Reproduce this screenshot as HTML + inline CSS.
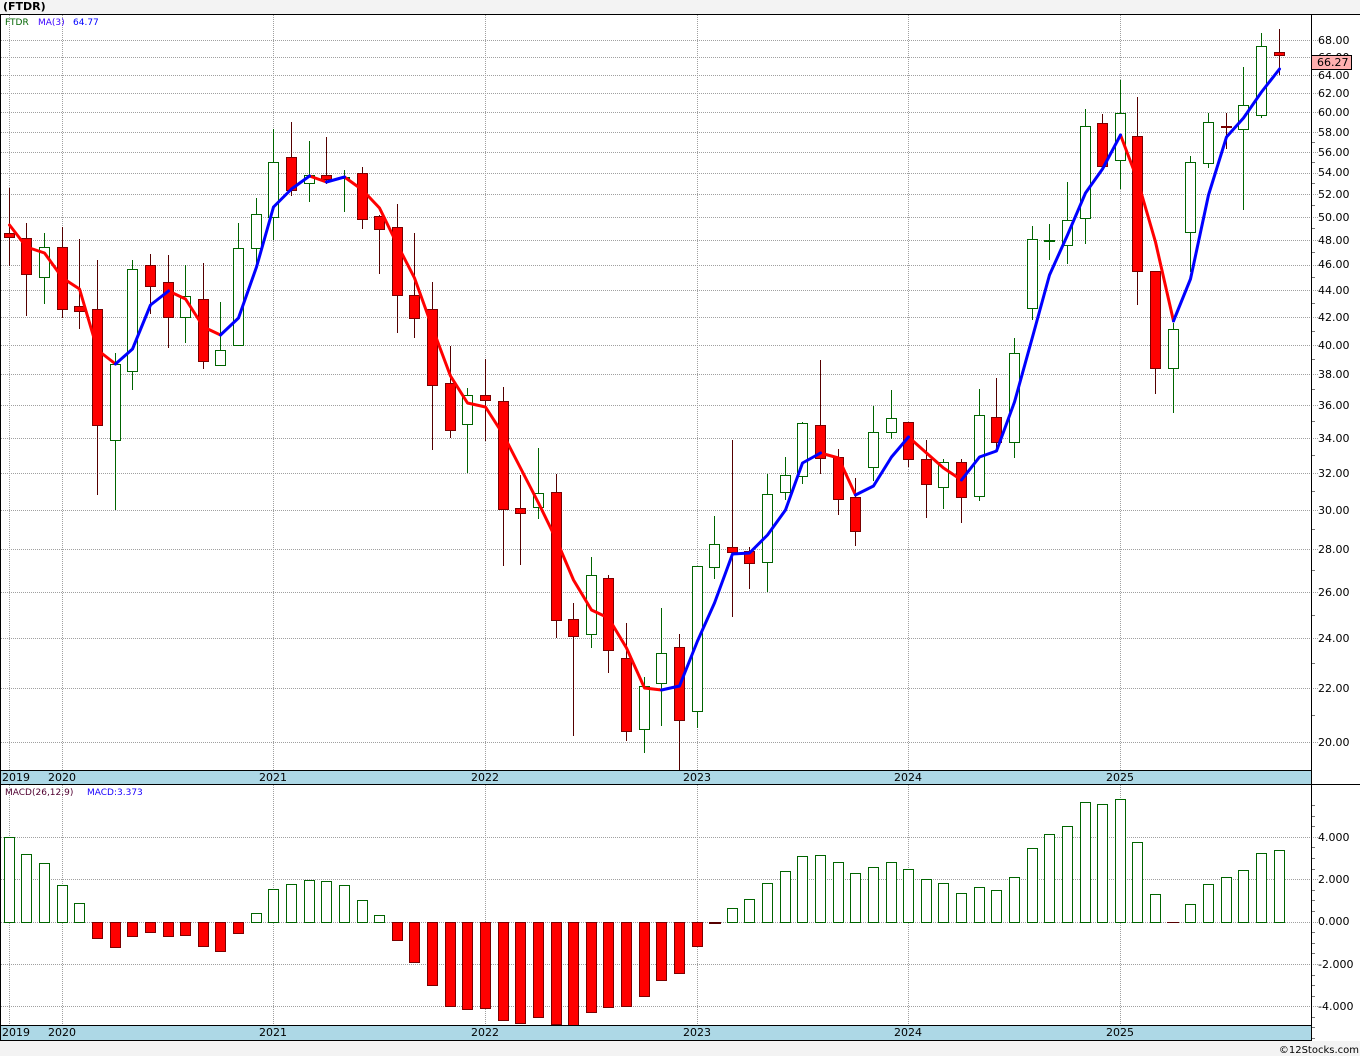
<!DOCTYPE html>
<html>
<head>
<meta charset="utf-8">
<title>(FTDR)</title>
<style>
html,body{margin:0;padding:0;background:#f3f3f3}
svg{display:block}
text{font-family:"DejaVu Sans","Liberation Sans",sans-serif;font-size:11px;fill:#000}
.s{font-size:9px}
</style>
</head>
<body>
<svg width="1360" height="1056" viewBox="0 0 1360 1056" xmlns="http://www.w3.org/2000/svg">
<rect width="1360" height="1056" fill="#f3f3f3"/>
<rect x="0" y="14" width="1360" height="1027" fill="#fff"/>
<text x="3" y="10" style="font-weight:bold">(FTDR)</text>

<g shape-rendering="crispEdges" fill="none">
<path stroke="#a0a0a0" stroke-dasharray="1 1" d="M1 40.5H1318M1 57.5H1318M1 75.5H1318M1 93.5H1318M1 112.5H1318M1 132.5H1318M1 152.5H1318M1 173.5H1318M1 194.5H1318M1 217.5H1318M1 240.5H1318M1 265.5H1318M1 290.5H1318M1 317.5H1318M1 345.5H1318M1 374.5H1318M1 405.5H1318M1 438.5H1318M1 473.5H1318M1 510.5H1318M1 549.5H1318M1 592.5H1318M1 638.5H1318M1 688.5H1318M1 742.5H1318M1 837.5H1318M1 879.5H1318M1 922.5H1318M1 964.5H1318M1 1006.5H1318"/>
<path stroke="#a0a0a0" stroke-dasharray="1 1" d="M9.5 15V770M62.5 15V770M273.5 15V770M485.5 15V770M697.5 15V770M908.5 15V770M1120.5 15V770M9.5 785V1025M62.5 785V1025M273.5 785V1025M485.5 785V1025M697.5 785V1025M908.5 785V1025M1120.5 785V1025"/>
<path stroke="#777" d="M1312 142.5h3M1312 162.5h3M1312 183.5h3M1312 205.5h3M1312 228.5h3M1312 252.5h3M1312 277.5h3M1312 303.5h3M1312 331.5h3M1312 359.5h3M1312 389.5h3M1312 421.5h3M1312 455.5h3M1312 491.5h3M1312 529.5h3M1312 570.5h3M1312 615.5h3M1312 663.5h3M1312 715.5h3M1312 805.5h3M1312 816.5h3M1312 826.5h3M1312 847.5h3M1312 858.5h3M1312 869.5h3M1312 890.5h3M1312 900.5h3M1312 911.5h3M1312 932.5h3M1312 943.5h3M1312 953.5h3M1312 975.5h3M1312 985.5h3M1312 996.5h3M1312 1017.5h3M1312 1027.5h3M1312 1038.5h3"/>

<!-- wicks -->
<path stroke="#006400" d="M44.5 233V304M115.5 353V510M132.5 260V390M185.5 265V343M220.5 302V366M238.5 223V346M256.5 198V266M273.5 129V240M309.5 141V202M344.5 170V212M467.5 388V473M538.5 448V519M591.5 557V648M644.5 677V753M661.5 608V726M697.5 566V728M714.5 516V579M767.5 474V592M785.5 457V500M802.5 422V484M873.5 406V481M891.5 390V439M943.5 459V509M979.5 389V501M1014.5 338V458M1032.5 226V320M1049.5 224V260M1067.5 182V264M1085.5 109V244M1120.5 80V189M1173.5 323V413M1190.5 156V272M1208.5 113V168M1243.5 67V210M1261.5 33V118"/>
<path stroke="#550000" d="M9.5 188V266M26.5 223V316M62.5 227V318M79.5 239V329M97.5 260V495M150.5 254V314M168.5 255V348M203.5 263V369M291.5 122V196M326.5 137V184M362.5 167V229M379.5 215V274M397.5 204V333M414.5 233V338M432.5 282V450M450.5 346V438M485.5 359V441M503.5 387V566M520.5 475V565M556.5 474V638M573.5 603V736M608.5 575V673M626.5 623V741M679.5 634V771M732.5 440V617M749.5 547V589M820.5 360V474M838.5 449V515M855.5 478V546M908.5 422V467M926.5 440V518M961.5 459V523M996.5 378V449M1102.5 114V169M1137.5 97V305M1155.5 271V394M1226.5 113V149M1279.5 29V75"/>

<!-- candle bodies -->
<path fill="#fff" stroke="#006400" d="M39.5 247.5h10v30h-10zM110.5 364.5h10v76h-10zM127.5 269.5h10v102h-10zM180.5 296.5h10v21h-10zM215.5 350.5h10v15h-10zM233.5 248.5h10v97h-10zM251.5 214.5h10v34h-10zM268.5 162.5h10v55h-10zM304.5 175.5h10v8h-10zM339.5 177.5h10v1h-10zM462.5 395.5h10v29h-10zM533.5 493.5h10v14h-10zM586.5 575.5h10v59h-10zM639.5 686.5h10v43h-10zM656.5 653.5h10v30h-10zM692.5 566.5h10v145h-10zM709.5 544.5h10v23h-10zM762.5 494.5h10v68h-10zM780.5 475.5h10v17h-10zM797.5 423.5h10v53h-10zM868.5 432.5h10v35h-10zM886.5 418.5h10v14h-10zM938.5 462.5h10v25h-10zM974.5 415.5h10v81h-10zM1009.5 353.5h10v89h-10zM1027.5 239.5h10v69h-10zM1044.5 240.5h10v1h-10zM1062.5 220.5h10v25h-10zM1080.5 126.5h10v92h-10zM1115.5 113.5h10v47h-10zM1168.5 329.5h10v39h-10zM1185.5 162.5h10v70h-10zM1203.5 122.5h10v41h-10zM1238.5 105.5h10v24h-10zM1256.5 46.5h10v69h-10z"/>
<path fill="#f00" stroke="#7a0000" d="M4.5 233.5h10v4h-10zM21.5 238.5h10v36h-10zM57.5 247.5h10v62h-10zM74.5 306.5h10v5h-10zM92.5 309.5h10v116h-10zM145.5 265.5h10v21h-10zM163.5 282.5h10v35h-10zM198.5 299.5h10v62h-10zM286.5 157.5h10v33h-10zM321.5 175.5h10v4h-10zM357.5 173.5h10v46h-10zM374.5 216.5h10v13h-10zM392.5 227.5h10v68h-10zM409.5 295.5h10v23h-10zM427.5 309.5h10v76h-10zM445.5 383.5h10v47h-10zM480.5 395.5h10v5h-10zM498.5 401.5h10v108h-10zM515.5 508.5h10v5h-10zM551.5 492.5h10v128h-10zM568.5 619.5h10v17h-10zM603.5 578.5h10v72h-10zM621.5 658.5h10v73h-10zM674.5 647.5h10v73h-10zM727.5 547.5h10v5h-10zM744.5 551.5h10v12h-10zM815.5 425.5h10v33h-10zM833.5 457.5h10v42h-10zM850.5 497.5h10v34h-10zM903.5 422.5h10v37h-10zM921.5 459.5h10v25h-10zM956.5 462.5h10v35h-10zM991.5 417.5h10v25h-10zM1097.5 123.5h10v43h-10zM1132.5 136.5h10v135h-10zM1150.5 271.5h10v97h-10zM1221.5 126.5h10v1h-10zM1274.5 52.5h10v3h-10z"/>

<!-- MACD bars -->
<path fill="#fff" stroke="#006400" d="M4.5 837.5h10V922.5h-10zM21.5 854.5h10V922.5h-10zM39.5 863.5h10V922.5h-10zM57.5 885.5h10V922.5h-10zM74.5 903.5h10V922.5h-10zM251.5 913.5h10V922.5h-10zM268.5 889.5h10V922.5h-10zM286.5 884.5h10V922.5h-10zM304.5 880.5h10V922.5h-10zM321.5 881.5h10V922.5h-10zM339.5 885.5h10V922.5h-10zM357.5 900.5h10V922.5h-10zM374.5 915.5h10V922.5h-10zM727.5 908.5h10V922.5h-10zM744.5 899.5h10V922.5h-10zM762.5 883.5h10V922.5h-10zM780.5 871.5h10V922.5h-10zM797.5 856.5h10V922.5h-10zM815.5 855.5h10V922.5h-10zM833.5 862.5h10V922.5h-10zM850.5 873.5h10V922.5h-10zM868.5 867.5h10V922.5h-10zM886.5 862.5h10V922.5h-10zM903.5 869.5h10V922.5h-10zM921.5 879.5h10V922.5h-10zM938.5 883.5h10V922.5h-10zM956.5 893.5h10V922.5h-10zM974.5 887.5h10V922.5h-10zM991.5 890.5h10V922.5h-10zM1009.5 877.5h10V922.5h-10zM1027.5 848.5h10V922.5h-10zM1044.5 834.5h10V922.5h-10zM1062.5 826.5h10V922.5h-10zM1080.5 802.5h10V922.5h-10zM1097.5 804.5h10V922.5h-10zM1115.5 799.5h10V922.5h-10zM1132.5 842.5h10V922.5h-10zM1150.5 894.5h10V922.5h-10zM1185.5 904.5h10V922.5h-10zM1203.5 884.5h10V922.5h-10zM1221.5 877.5h10V922.5h-10zM1238.5 870.5h10V922.5h-10zM1256.5 853.5h10V922.5h-10zM1274.5 850.5h10V922.5h-10z"/>
<path fill="#f00" stroke="#7a0000" d="M92.5 922.5h10V938.5h-10zM110.5 922.5h10V947.5h-10zM127.5 922.5h10V936.5h-10zM145.5 922.5h10V932.5h-10zM163.5 922.5h10V936.5h-10zM180.5 922.5h10V935.5h-10zM198.5 922.5h10V946.5h-10zM215.5 922.5h10V951.5h-10zM233.5 922.5h10V933.5h-10zM392.5 922.5h10V940.5h-10zM409.5 922.5h10V962.5h-10zM427.5 922.5h10V985.5h-10zM445.5 922.5h10V1006.5h-10zM462.5 922.5h10V1009.5h-10zM480.5 922.5h10V1008.5h-10zM498.5 922.5h10V1020.5h-10zM515.5 922.5h10V1023.5h-10zM533.5 922.5h10V1017.5h-10zM551.5 922.5h10V1024.5h-10zM568.5 922.5h10V1025.5h-10zM586.5 922.5h10V1012.5h-10zM603.5 922.5h10V1007.5h-10zM621.5 922.5h10V1006.5h-10zM639.5 922.5h10V996.5h-10zM656.5 922.5h10V980.5h-10zM674.5 922.5h10V973.5h-10zM692.5 922.5h10V946.5h-10z"/>
<path stroke="#550000" stroke-width="2" d="M709 923h12"/>
<path stroke="#550000" d="M1167 922.5h12"/>
</g>

<!-- moving average -->
<g fill="none" stroke-width="3" stroke-linejoin="round" stroke-linecap="round" transform="translate(.5 0)">
<path stroke="#f00" d="M9 225L26 247 44 253 62 278 79 289 97 350 115 364M168 291L185 299 203 327 220 335M309 176L326 182M344 177L362 190 379 208 397 245 414 278 432 328 450 376 467 403 485 407 503 435 520 468 538 503 556 540 573 580 591 610 608 618 626 648 644 688 661 690M820 453L838 458 855 495M908 437L926 453 943 468 961 480M1120 135L1137 180 1155 242 1173 321"/>
<path stroke="#00f" d="M115 364L132 349 150 305 168 291M220 335L238 318 256 267 273 207 291 189 309 176M326 182L344 177M661 690L679 686 697 641 714 603 732 554 749 553 767 535 785 510 802 463 820 453M855 495L873 486 891 457 908 437M961 480L979 457 996 451 1014 402 1032 337 1049 275 1067 235 1085 193 1102 169 1120 135M1173 321L1190 279 1208 195 1226 137 1243 118 1261 92 1279 69"/>
</g>

<!-- bands and frame -->
<g shape-rendering="crispEdges">
<rect x="1" y="771" width="1310" height="13" fill="#add8e6"/>
<rect x="1" y="1026" width="1310" height="14" fill="#add8e6"/>
<rect x="0" y="1041" width="1360" height="15" fill="#f3f3f3"/>
<rect x="0" y="14" width="1360" height="1" fill="#000"/>
<rect x="0" y="14" width="1" height="1027" fill="#000"/>
<rect x="1311" y="14" width="1" height="1027" fill="#000"/>
<rect x="0" y="770" width="1311" height="1" fill="#000"/>
<rect x="0" y="784" width="1360" height="1" fill="#000"/>
<rect x="0" y="1025" width="1311" height="1" fill="#000"/>
<rect x="0" y="1040" width="1311" height="1" fill="#000"/>
</g>

<!-- legend -->
<text class="s" x="5" y="25" style="fill:#006400">FTDR</text>
<text class="s" x="38" y="25" style="fill:#3a00ff">MA(3)</text>
<text class="s" x="73" y="25" style="fill:#0000ff">64.77</text>
<text class="s" x="5" y="795" style="fill:#500030">MACD(26,12,9)</text>
<text class="s" x="87" y="795" style="fill:#1a00ff">MACD:3.373</text>

<!-- price axis -->
<g>
<text x="1318" y="44">68.00</text>
<text x="1318" y="61">66.00</text>
<text x="1318" y="79">64.00</text>
<text x="1318" y="97">62.00</text>
<text x="1318" y="116">60.00</text>
<text x="1318" y="136">58.00</text>
<text x="1318" y="156">56.00</text>
<text x="1318" y="176">54.00</text>
<text x="1318" y="198">52.00</text>
<text x="1318" y="221">50.00</text>
<text x="1318" y="244">48.00</text>
<text x="1318" y="268">46.00</text>
<text x="1318" y="294">44.00</text>
<text x="1318" y="321">42.00</text>
<text x="1318" y="349">40.00</text>
<text x="1318" y="378">38.00</text>
<text x="1318" y="409">36.00</text>
<text x="1318" y="442">34.00</text>
<text x="1318" y="477">32.00</text>
<text x="1318" y="514">30.00</text>
<text x="1318" y="553">28.00</text>
<text x="1318" y="596">26.00</text>
<text x="1318" y="642">24.00</text>
<text x="1318" y="692">22.00</text>
<text x="1318" y="746">20.00</text>
<rect x="1311.5" y="55.5" width="40" height="14" fill="#ffb0b0" stroke="#000" shape-rendering="crispEdges"/>
<text x="1317" y="66">66.27</text>
</g>

<!-- MACD axis -->
<text x="1318" y="841">4.000</text>
<text x="1318" y="883">2.000</text>
<text x="1318" y="925">0.000</text>
<text x="1318" y="968">-2.000</text>
<text x="1318" y="1010">-4.000</text>

<!-- year labels -->
<g text-anchor="middle">
<text x="16" y="781">2019</text>
<text x="62" y="781">2020</text>
<text x="273" y="781">2021</text>
<text x="485" y="781">2022</text>
<text x="697" y="781">2023</text>
<text x="908" y="781">2024</text>
<text x="1120" y="781">2025</text>
<text x="16" y="1036">2019</text>
<text x="62" y="1036">2020</text>
<text x="273" y="1036">2021</text>
<text x="485" y="1036">2022</text>
<text x="697" y="1036">2023</text>
<text x="908" y="1036">2024</text>
<text x="1120" y="1036">2025</text>
</g>

<text x="1359" y="1053" text-anchor="end" style="font-size:10px">©12Stocks.com</text>
</svg>
</body>
</html>
